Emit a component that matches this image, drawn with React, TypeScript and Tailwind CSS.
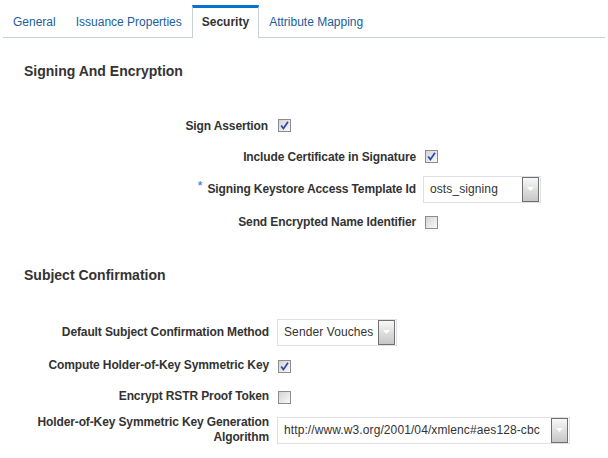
import React from "react";

function Checkbox({ checked }: { checked: boolean }) {
  return (
    <svg width="13" height="13" viewBox="0 0 13 13" className="block shrink-0">
      <defs>
        <linearGradient id="cbg" x1="0" y1="0" x2="1" y2="1">
          <stop offset="0" stopColor="#d2d2d2" />
          <stop offset="1" stopColor="#fbfbfb" />
        </linearGradient>
      </defs>
      <rect x="0.5" y="0.5" width="12" height="12" fill="url(#cbg)" stroke="#8c8c8c" />
      {checked && (
        <path d="M3.2 6.4 L5.4 9.6 L10 2.8" stroke="#2b4aa8" strokeWidth="1.7" fill="none" strokeLinejoin="miter" />
      )}
    </svg>
  );
}

function Select({ value, className }: { value: string; className: string }) {
  return (
    <div className={`flex h-[27px] items-center border border-[#dde1e5] bg-white pl-[6px] pr-px font-normal ${className}`}>
      <span className="text-[12px] tracking-[0.1px] text-[#333] whitespace-nowrap">{value}</span>
      <div className="ml-auto flex h-[25px] w-[17px] items-center justify-center border border-[#707070] bg-linear-to-b from-[#f8f8f8] to-[#c6c6c6]">
        <svg width="7" height="4" viewBox="0 0 7 4" className="block">
          <path d="M0 0 H7 L3.5 4 Z" fill="#ffffff" />
        </svg>
      </div>
    </div>
  );
}

function Tab({ label, active }: { label: string; active?: boolean }) {
  if (active) {
    return (
      <div className="relative -mb-px flex h-[33px] items-center border-x border-t-[3px] border-x-[#c9d1d8] border-t-[#0572ce] bg-white px-[9px] pb-[2px] text-[12px] font-bold text-[#333]">
        {label}
      </div>
    );
  }
  return (
    <div className="flex h-[32px] items-center border-x border-transparent px-[9px] pt-[1px] text-[12px] text-[#1c5d9f]">
      {label}
    </div>
  );
}

export default function App() {
  return (
    <div className="h-[458px] w-[608px] bg-white font-['Liberation_Sans',Arial,sans-serif] text-[#333]">
      <div className="mx-[3px] flex border-b border-[#c9d1d8] pt-[5px]">
        <Tab label="General" />
        <Tab label="Issuance Properties" />
        <Tab label="Security" active />
        <Tab label="Attribute Mapping" />
      </div>

      <div className="mt-[25px] ml-6 text-[14px] font-bold leading-4">Signing And Encryption</div>

      <div className="mt-[31px] text-[12px] font-bold tracking-[-0.12px]">
        <div className="flex h-[31px] items-center">
          <div className="w-[268px] text-right">Sign Assertion</div>
          <div className="ml-[10px]"><Checkbox checked /></div>
        </div>
        <div className="flex h-[31px] items-center">
          <div className="w-[416px] text-right">Include Certificate in Signature</div>
          <div className="ml-[9px]"><Checkbox checked /></div>
        </div>
        <div className="flex h-[34px] items-center">
          <div className="w-[416px] text-right">
            <span className="relative -top-[3px] mr-[5px] font-normal text-[13px] text-[#2b6fc7]">*</span>
            Signing Keystore Access Template Id
          </div>
          <Select value="osts_signing" className="ml-[7px] w-[118px]" />
        </div>
        <div className="flex h-[32px] items-center">
          <div className="w-[416px] text-right">Send Encrypted Name Identifier</div>
          <div className="ml-[9px]"><Checkbox checked={false} /></div>
        </div>
      </div>

      <div className="mt-[29px] ml-6 text-[14px] font-bold leading-4">Subject Confirmation</div>

      <div className="mt-[32px] text-[12px] font-bold tracking-[-0.12px]">
        <div className="flex h-[34px] items-center">
          <div className="w-[269px] text-right">Default Subject Confirmation Method</div>
          <Select value="Sender Vouches" className="ml-[8px] w-[120px]" />
        </div>
        <div className="flex h-[32px] items-center">
          <div className="w-[269px] text-right">Compute Holder-of-Key Symmetric Key</div>
          <div className="ml-[9px] mt-[3px]"><Checkbox checked /></div>
        </div>
        <div className="flex h-[30px] items-center">
          <div className="w-[269px] text-right">Encrypt RSTR Proof Token</div>
          <div className="ml-[9px] mt-[2px]"><Checkbox checked={false} /></div>
        </div>
        <div className="flex h-[38px] items-center">
          <div className="w-[269px] text-right leading-[15px]">
            Holder-of-Key Symmetric Key Generation
            <br />
            Algorithm
          </div>
          <Select value="http://www.w3.org/2001/04/xmlenc#aes128-cbc" className="ml-[8px] w-[293px]" />
        </div>
      </div>
    </div>
  );
}
